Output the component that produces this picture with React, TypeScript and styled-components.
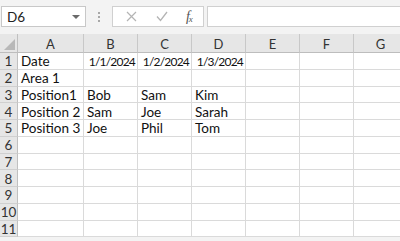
import React from 'react';
import styled, { createGlobalStyle } from 'styled-components';

const GlobalStyle = createGlobalStyle`
  html, body {
    margin: 0;
    padding: 0;
    background: #ffffff;
    overflow: hidden;
  }
`;

const Page = styled.div`
  width: 400px;
  height: 241px;
  overflow: hidden;
  font-family: 'Lato', 'Liberation Sans', sans-serif;
  background: #f3f3f3;
`;

const Toolbar = styled.div`
  height: 34px;
  display: flex;
  align-items: flex-start;
  padding-top: 6px;
  box-sizing: border-box;
  padding-left: 1px;
`;

const NameBox = styled.div`
  width: 85px;
  height: 21px;
  box-sizing: border-box;
  background: #fff;
  border: 1px solid #c8c8c8;
  display: flex;
  align-items: center;
  justify-content: space-between;
  padding: 0 5px 0 5px;
  font-size: 13.5px;
  color: #222;
`;

const DropArrow = styled.span`
  width: 0;
  height: 0;
  border-left: 4px solid transparent;
  border-right: 4px solid transparent;
  border-top: 4px solid #6a6a6a;
`;

const Grip = styled.div`
  width: 26px;
  height: 21px;
  display: flex;
  flex-direction: column;
  align-items: center;
  justify-content: center;
  gap: 2px;
  span {
    width: 2px;
    height: 2px;
    background: #a8a8a8;
  }
`;

const IconBox = styled.div`
  width: 92px;
  height: 21px;
  box-sizing: border-box;
  background: #fff;
  border: 1px solid #d0d0d0;
  display: flex;
  align-items: center;
  justify-content: space-around;
  padding: 0 2px 0 4px;
`;

const Fx = styled.span`
  font-family: 'Liberation Serif', serif;
  font-style: italic;
  font-size: 14px;
  color: #555;
  letter-spacing: -1px;
  sub {
    font-size: 9px;
    vertical-align: -1px;
  }
`;

const FormulaInput = styled.div`
  flex: 1;
  height: 21px;
  margin-left: 3px;
  box-sizing: border-box;
  background: #fff;
  border: 1px solid #d0d0d0;
  border-right: none;
`;

const Sheet = styled.div`
  display: grid;
  grid-template-columns: 18px 66px 54px 54px 54px 54px 54px 54px;
  grid-template-rows: 19px repeat(11, 16.75px);
  background: #fff;
  width: 408px;
`;

const Corner = styled.div`
  background: #e6e6e6;
  border-right: 1px solid #c0c0c0;
  border-bottom: 1px solid #bdbdbd;
  box-sizing: border-box;
  position: relative;
  &::after {
    content: '';
    position: absolute;
    right: 2px;
    bottom: 2px;
    width: 0;
    height: 0;
    border-left: 11px solid transparent;
    border-bottom: 11px solid #b8b8b8;
  }
`;

const ColHead = styled.div`
  background: #e6e6e6;
  border-right: 1px solid #c8c8c8;
  border-bottom: 1px solid #bdbdbd;
  box-sizing: border-box;
  display: flex;
  align-items: center;
  justify-content: center;
  font-size: 13px;
  color: #333;
  padding-top: 1px;
`;

const RowHead = styled.div`
  background: #e6e6e6;
  border-right: 1px solid #c0c0c0;
  border-bottom: 1px solid #d0d0d0;
  box-sizing: border-box;
  display: flex;
  align-items: center;
  justify-content: center;
  font-size: 13.5px;
  color: #333;
  padding-top: 1px;
`;

const Cell = styled.div<{ $date?: boolean }>`
  border-right: 1px solid #dadada;
  border-bottom: 1px solid #dadada;
  box-sizing: border-box;
  display: flex;
  align-items: center;
  justify-content: ${(p) => (p.$date ? 'flex-end' : 'flex-start')};
  padding: 1px 2px 0 3px;
  font-size: ${(p) => (p.$date ? '12px' : '13.5px')};
  letter-spacing: ${(p) => (p.$date ? '-0.8px' : 'normal')};
  color: #111;
  white-space: nowrap;
  overflow: visible;
`;

const cols = ['A', 'B', 'C', 'D', 'E', 'F', 'G'];

const data: (string | null)[][] = [
  ['Date', '1/1/2024', '1/2/2024', '1/3/2024'],
  ['Area 1'],
  ['Position1', 'Bob', 'Sam', 'Kim'],
  ['Position 2', 'Sam', 'Joe', 'Sarah'],
  ['Position 3', 'Joe', 'Phil', 'Tom'],
];

const isDate = (v: string) => /^\d+\/\d+\/\d+$/.test(v);

function CrossIcon() {
  return (
    <svg width="11" height="11" viewBox="0 0 11 11">
      <path d="M1 1 L10 10 M10 1 L1 10" stroke="#b4b4b4" strokeWidth="1.2" fill="none" />
    </svg>
  );
}

function CheckIcon() {
  return (
    <svg width="12" height="11" viewBox="0 0 12 11">
      <path d="M1 5.5 L4.5 9.5 L11 1" stroke="#b4b4b4" strokeWidth="1.3" fill="none" />
    </svg>
  );
}

export default function App() {
  return (
    <Page>
      <GlobalStyle />
      <Toolbar>
        <NameBox>
          D6
          <DropArrow />
        </NameBox>
        <Grip>
          <span />
          <span />
          <span />
        </Grip>
        <IconBox>
          <CrossIcon />
          <CheckIcon />
          <Fx>
            f<sub>x</sub>
          </Fx>
        </IconBox>
        <FormulaInput />
      </Toolbar>
      <Sheet>
        <Corner />
        {cols.map((c) => (
          <ColHead key={c}>{c}</ColHead>
        ))}
        {Array.from({ length: 11 }, (_, r) => (
          <React.Fragment key={r}>
            <RowHead>{r + 1}</RowHead>
            {cols.map((c, ci) => {
              const v = data[r]?.[ci] ?? '';
              return (
                <Cell key={c} $date={!!v && isDate(v)}>
                  {v}
                </Cell>
              );
            })}
          </React.Fragment>
        ))}
      </Sheet>
    </Page>
  );
}
